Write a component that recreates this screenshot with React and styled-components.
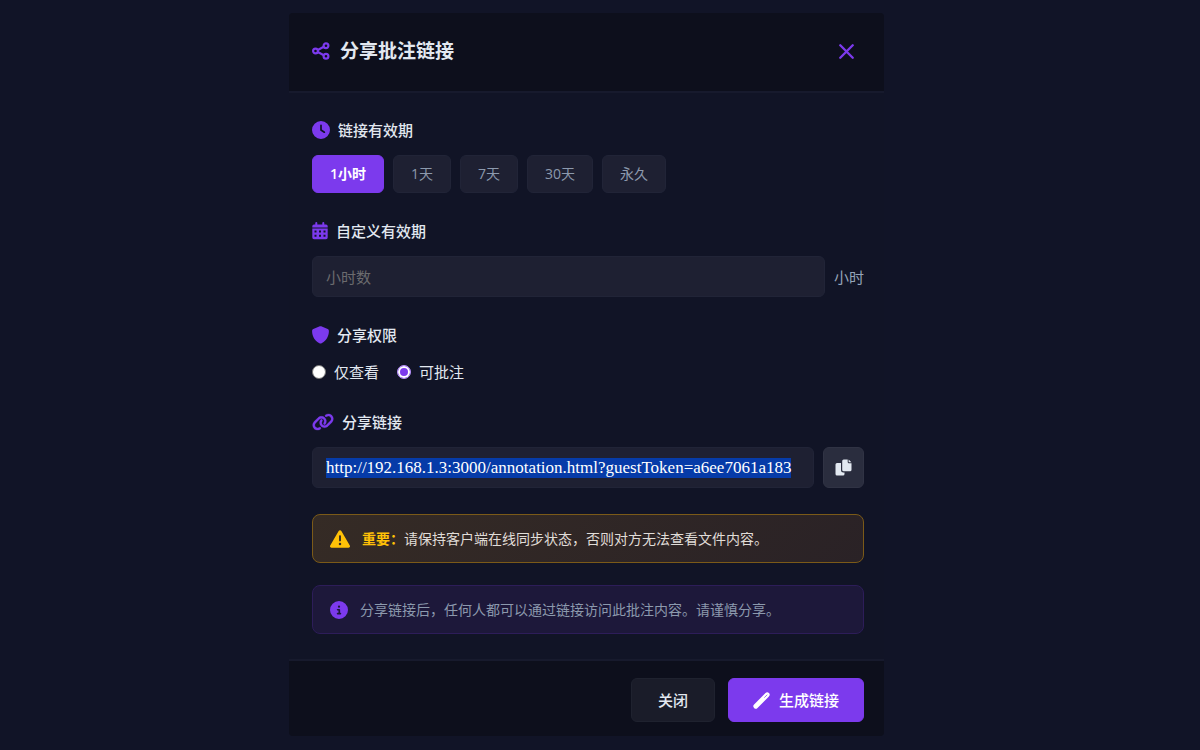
import React, { useEffect, useRef, useState } from 'react';
import styled, { createGlobalStyle } from 'styled-components';
import {
  FaCircleInfo,
  FaClock,
  FaLink,
  FaTriangleExclamation,
} from 'react-icons/fa6';

const durations = [
  { id: '1h', label: '1小时' },
  { id: '1d', label: '1天' },
  { id: '7d', label: '7天' },
  { id: '30d', label: '30天' },
  { id: 'forever', label: '永久' },
];

const permissions = [
  { id: 'view', label: '仅查看' },
  { id: 'annotate', label: '可批注' },
];

const shareUrl = 'http://192.168.1.3:3000/annotation.html?guestToken=a6ee7061a183';

const ShareIcon = () => (
  <svg width="18" height="18" viewBox="0 0 18 18" fill="none" stroke="currentColor" strokeWidth="2.2" aria-hidden="true">
    <circle cx="3.5" cy="9" r="2.4" />
    <circle cx="14" cy="3.7" r="2.4" />
    <circle cx="14" cy="14.3" r="2.4" />
    <path d="M5.8 7.9l6-3.1M5.8 10.1l6 3.1" />
  </svg>
);

const CloseIcon = () => (
  <svg width="15" height="15" viewBox="0 0 14 14" fill="none" stroke="currentColor" strokeWidth="2.2" strokeLinecap="round" aria-hidden="true">
    <path d="M1.2 1.2l11.6 11.6M12.8 1.2L1.2 12.8" />
  </svg>
);

const CalendarIcon = () => (
  <svg width="16" height="18" viewBox="0 0 16 18" fill="currentColor" fillRule="evenodd" aria-hidden="true">
    <path d="M3.3 1a1 1 0 0 1 2 0v1.5h5V1a1 1 0 0 1 2 0v1.5H14a1.7 1.7 0 0 1 1.7 1.7V5.5H.3V4.2A1.7 1.7 0 0 1 2 2.5h1.3z" />
    <path d="M.3 6.5h15.4v9a1.7 1.7 0 0 1-1.7 1.7H2a1.7 1.7 0 0 1-1.7-1.7zM2.5 8.5v2h2v-2zM7 8.5v2h2v-2zM11.5 8.5v2h2v-2zM2.5 12.7v2h2v-2zM7 12.7v2h2v-2zM11.5 12.7v2h2v-2z" />
  </svg>
);

const ShieldIcon = () => (
  <svg width="17" height="18" viewBox="0 0 17 18" fill="currentColor" aria-hidden="true">
    <path d="M8.5 .2c.2 0 .5 0 .7.1l6.5 2.8c.7.3 1.2 1 1.2 1.8 0 3.4-1.3 9.3-7.3 12.3-.7.3-1.5.3-2.2 0C1.4 14.2.1 8.3.1 4.900c0-.8.5-1.5 1.2-1.8L7.8.3c.2-.1.5-.1.7-.1z" />
  </svg>
);

const CopyIcon = () => (
  <svg width="17" height="17" viewBox="0 0 17 17" fill="currentColor" aria-hidden="true">
    <path d="M2 4h4v7.2A2.3 2.3 0 0 0 8.3 13.5H9.5V15a1.5 1.5 0 0 1-1.5 1.5H2A1.5 1.5 0 0 1 .5 15V5.5A1.5 1.5 0 0 1 2 4z" />
    <path d="M8.7.5h4v2.5A1.2 1.2 0 0 0 13.9 4.2h2.6v6.6a1.5 1.5 0 0 1-1.5 1.5H8.7a1.5 1.5 0 0 1-1.5-1.5V2A1.5 1.5 0 0 1 8.7.5z" />
    <path d="M13.6.6l2.8 2.7h-2.8z" />
  </svg>
);

const WandIcon = () => (
  <svg width="17" height="17" viewBox="0 0 17 17" fill="none" stroke="currentColor" strokeLinecap="round" aria-hidden="true">
    <path d="M2.8 14.2L14.2 2.8" strokeWidth="4.8" />
    <path d="M11.6 5.4l2.4-2.4" stroke="#a47bf1" strokeWidth="1" />
  </svg>
);

const App = () => {
  const [duration, setDuration] = useState('1h');
  const [hours, setHours] = useState('');
  const [permission, setPermission] = useState('annotate');
  const linkInput = useRef(null);

  useEffect(() => {
    linkInput.current.focus();
    linkInput.current.select();
  }, []);

  const copyLink = () => {
    linkInput.current.select();
    document.execCommand('copy');
  };

  return (
    <>
      <GlobalStyle />
      <Page>
        <Modal role="dialog" aria-labelledby="share-title">
          <Header>
            <Title id="share-title">
              <ShareIcon />
              分享批注链接
            </Title>
            <CloseButton type="button" aria-label="关闭窗口">
              <CloseIcon />
            </CloseButton>
          </Header>

          <Body>
            <Section>
              <Label as="h3">
                <FaClock size={18} />
                链接有效期
              </Label>
              <Durations>
                {durations.map(item => (
                  <DurationButton
                    key={item.id}
                    type="button"
                    $active={item.id === duration}
                    onClick={() => setDuration(item.id)}
                  >
                    {item.label}
                  </DurationButton>
                ))}
              </Durations>
            </Section>

            <Section>
              <Label htmlFor="hours">
                <CalendarIcon />
                自定义有效期
              </Label>
              <Row>
                <Input
                  id="hours"
                  placeholder="小时数"
                  value={hours}
                  onChange={e => setHours(e.target.value)}
                />
                <Unit>小时</Unit>
              </Row>
            </Section>

            <Section>
              <Label as="h3">
                <ShieldIcon />
                分享权限
              </Label>
              <Permissions>
                {permissions.map(item => (
                  <RadioLabel key={item.id}>
                    <Radio
                      type="radio"
                      name="permission"
                      checked={item.id === permission}
                      onChange={() => setPermission(item.id)}
                    />
                    {item.label}
                  </RadioLabel>
                ))}
              </Permissions>
            </Section>

            <Section>
              <Label htmlFor="link">
                <LinkIcon size={22} />
                分享链接
              </Label>
              <Row>
                <LinkInput id="link" ref={linkInput} value={shareUrl} readOnly />
                <CopyButton type="button" aria-label="复制链接" onClick={copyLink}>
                  <CopyIcon />
                </CopyButton>
              </Row>
            </Section>

            <Warning>
              <FaTriangleExclamation size={20} />
              <p>
                <strong>重要：</strong>
                请保持客户端在线同步状态，否则对方无法查看文件内容。
              </p>
            </Warning>

            <Info>
              <FaCircleInfo size={18} />
              <p>分享链接后，任何人都可以通过链接访问此批注内容。请谨慎分享。</p>
            </Info>
          </Body>

          <Footer>
            <Button type="button">关闭</Button>
            <Button type="button" $primary>
              <WandIcon />
              生成链接
            </Button>
          </Footer>
        </Modal>
      </Page>
    </>
  );
};

const GlobalStyle = createGlobalStyle`
  * {
    box-sizing: border-box;
  }

  body {
    margin: 0;
    background: #111427;
    color: #e2e8f0;
    font-family: 'Open Sans', 'Noto Sans CJK SC', sans-serif;
    font-size: 15px;
    line-height: 24px;
  }

  button,
  input {
    font: inherit;
  }

  h2,
  h3,
  p {
    margin: 0;
  }

  svg {
    flex-shrink: 0;
  }
`;

const Page = styled.main`
  display: flex;
  justify-content: center;
  padding: 13px 27px 13px 0;
`;

const Modal = styled.div`
  width: 100%;
  max-width: 595px;
  background: #111426;
  border-radius: 4px;
  overflow: hidden;
`;

const Header = styled.header`
  display: flex;
  align-items: center;
  justify-content: space-between;
  height: 80px;
  padding: 0 20px 2px 23px;
  background: #0d0f1c;
  border-bottom: 2px solid #171a2d;
`;

const Title = styled.h2`
  display: flex;
  align-items: center;
  gap: 10px;
  font-size: 19px;
  font-weight: 700;
  color: #e2e8f0;

  svg {
    color: #7c3aed;
  }
`;

const CloseButton = styled.button`
  display: flex;
  align-items: center;
  justify-content: center;
  width: 36px;
  height: 36px;
  padding: 0;
  border: none;
  background: none;
  color: #7c3aed;
  cursor: pointer;
`;

const Body = styled.div`
  display: flex;
  flex-direction: column;
  padding: 25px 20px 25px 23px;
`;

const Section = styled.section`
  margin-bottom: 26px;
`;

const Label = styled.label`
  display: flex;
  align-items: center;
  gap: 8px;
  margin-bottom: 13px;
  font-size: 15px;
  font-weight: 500;
  color: #e2e8f0;

  svg {
    color: #7c3aed;
  }
`;

const LinkIcon = styled(FaLink)`
  stroke: currentColor;
  stroke-width: 8;
`;

const Durations = styled.div`
  display: flex;
  flex-wrap: wrap;
  gap: 9px;
`;

const DurationButton = styled.button`
  height: 38px;
  padding: 0 17px;
  border: 1px solid ${props => (props.$active ? '#7c3aed' : '#212437')};
  border-radius: 6px;
  background: ${props => (props.$active ? '#7c3aed' : '#1e2032')};
  color: ${props => (props.$active ? '#fff' : '#8c99ad')};
  font-size: 14px;
  font-weight: ${props => (props.$active ? 600 : 400)};
  cursor: pointer;
`;

const Row = styled.div`
  display: flex;
  align-items: center;
  gap: 9px;
`;

const Input = styled.input`
  flex: 1;
  min-width: 0;
  height: 41px;
  padding: 0 13px;
  border: 1px solid #212437;
  border-radius: 6px;
  background: #1e2032;
  color: #e2e8f0;
  outline: none;

  &::placeholder {
    color: #6b6b6e;
  }
`;

const LinkInput = styled(Input)`
  font-family: 'Liberation Serif', serif;
  font-size: 17px;

  &::selection {
    background: #063ba8;
    color: #fff;
  }
`;

const Unit = styled.span`
  color: #94a3b8;
`;

const Permissions = styled.div`
  display: flex;
  gap: 18px;
`;

const RadioLabel = styled.label`
  display: flex;
  align-items: center;
  gap: 8px;
  cursor: pointer;
`;

const Radio = styled.input`
  appearance: none;
  width: 14px;
  height: 14px;
  margin: 0;
  border: 1px solid #767676;
  border-radius: 50%;
  background: #fff;

  &:checked {
    border: 1px solid #b794f6;
    background: #7c3aed;
    box-shadow: inset 0 0 0 2px #fff;
  }
`;

const CopyButton = styled.button`
  display: flex;
  align-items: center;
  justify-content: center;
  width: 41px;
  height: 41px;
  padding: 0;
  border: 1px solid #303344;
  border-radius: 6px;
  background: #2a2d3e;
  color: #e2e8f0;
  cursor: pointer;
`;

const Notice = styled.div`
  display: flex;
  align-items: center;
  gap: 12px;
  padding: 12px 17px;
  border-radius: 8px;
  font-size: 14px;
  line-height: 23px;
`;

const Warning = styled(Notice)`
  margin-bottom: 22px;
  border: 1px solid #7b5a18;
  background: linear-gradient(135deg, #352b25, #2a2226);
  color: #e0ddd8;

  svg,
  strong {
    color: #ffc107;
  }
`;

const Info = styled(Notice)`
  border: 1px solid #2d1d59;
  background: #1d183a;
  color: #8c99ad;

  svg {
    color: #7c3aed;
  }
`;

const Footer = styled.footer`
  display: flex;
  align-items: center;
  justify-content: flex-end;
  gap: 13px;
  padding: 17px 20px 14px 23px;
  background: #0d0f1c;
  border-top: 2px solid #171a2d;
`;

const Button = styled.button`
  display: flex;
  align-items: center;
  gap: 9px;
  height: 44px;
  padding: 0 ${props => (props.$primary ? 24 : 26)}px;
  border: 1px solid ${props => (props.$primary ? '#7c3aed' : '#1f222f')};
  border-radius: 6px;
  background: ${props => (props.$primary ? '#7c3aed' : '#1a1c29')};
  color: ${props => (props.$primary ? '#fff' : '#e2e8f0')};
  font-weight: 500;
  cursor: pointer;
`;

export default App;
